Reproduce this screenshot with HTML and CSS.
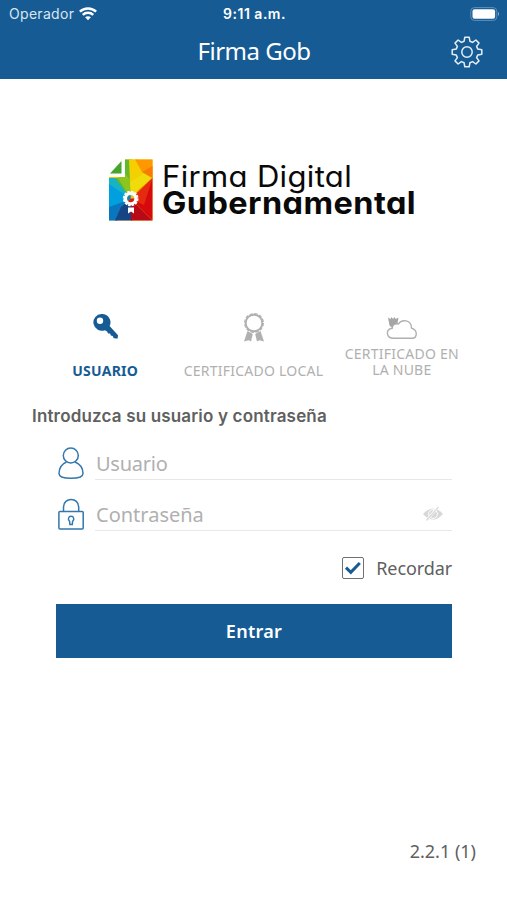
FILE: index.html
```html
<!DOCTYPE html>
<html lang="es">

<head>
  <meta charset="UTF-8">
  <meta name="viewport" content="width=device-width, initial-scale=1.0">
  <title>Firma Gob</title>

  <link rel="stylesheet" href="styles.css">
</head>

<body>

  <header>
    <div class="status-bar">
      <div class="carrier">
        <span>Operador</span>
        <svg width="18" height="14" viewBox="0 0 18 14" fill="none" stroke="#fff" stroke-width="2.5">
          <path d="M.9 4.7C5.3.4 12.7.4 17.1 4.7" />
          <path d="M3.8 7.9C6.7 5.1 11.3 5.1 14.2 7.9" />
          <path d="M6.1 10.2C7.7 8.8 10.3 8.8 11.9 10.2L9 13.2Z" fill="#fff" stroke="none" />
        </svg>
      </div>
      <span class="time">9:11 a.m.</span>
      <svg class="battery" width="30" height="14" viewBox="0 0 30 14">
        <rect x=".8" y=".6" width="26" height="12.8" rx="3.6" fill="none" stroke="#5f90b8" />
        <rect x="2.5" y="2.3" width="22.6" height="9.4" rx="2" fill="#fff" />
        <path d="M28 4.8Q30 7 28 9.2Z" fill="#8db0cd" />
      </svg>
    </div>

    <div class="title-bar">
      <h1>Firma Gob</h1>
      <svg class="gear" width="32" height="32" viewBox="0 0 32 32" fill="none" stroke="#e3eef8" stroke-width="1.5" stroke-linejoin="round">
        <path d="M13.8 1.2H18.2L18.9 5.2 21.6 6.4 24.9 4 28 7.1 25.6 10.4 26.8 13.1 30.8 13.8V18.2L26.8 18.9 25.6 21.6 28 24.9 24.9 28 21.6 25.6 18.9 26.8 18.2 30.8H13.8L13.1 26.8 10.4 25.6 7.1 28 4 24.9 6.4 21.6 5.2 18.9 1.2 18.2V13.8L5.2 13.1 6.4 10.4 4 7.1 7.1 4 10.4 6.4 13.1 5.2Z" />
        <circle cx="16" cy="16" r="5.2" />
      </svg>
    </div>
  </header>

  <main>

    <svg class="logo" width="310" height="64" viewBox="0 0 310 64">
      <path d="M1 19V1.5H44.5V62.5H1Z" fill="#f7c600" />
      <path d="M16 1.5H24L22 24 23 41 5 20H16Z" fill="#63b82c" />
      <path d="M16 14 22 22 23 41 10 20Z" fill="#8cc51e" />
      <path d="M21 1.5H30L36 15 22 24Z" fill="#f5d000" />
      <path d="M22 24 36 15 44.5 20 23 41Z" fill="#f0dc0b" />
      <path d="M27 1.5H44.5V20L34 14Z" fill="#ff9800" />
      <path d="M44.5 8V20L34 14Z" fill="#f97c00" />
      <path d="M44.5 20 23 41 31 31Z" fill="#f6a500" />
      <path d="M44.5 20V62.5L23 41Z" fill="#d8090c" />
      <path d="M44.5 20 36 47 23 41Z" fill="#e62a10" />
      <path d="M1 20H7L23 41 1 29Z" fill="#16b2c6" />
      <path d="M1 26 23 41 1 52Z" fill="#00a0df" />
      <path d="M1 49 23 41 9 62.5H1Z" fill="#0877bd" />
      <path d="M7 62.5 13 49 23 41 24 62.5Z" fill="#174584" />
      <path d="M23 41 44.5 62.5H23Z" fill="#b80a16" />
      <path d="M0 0H17V19H0Z" fill="#fff" />
      <path d="M2 15.5 13.5 3V15.5Z" fill="#45a62b" />
      <circle cx="22.7" cy="40.5" r="5.2" fill="#e6c523" stroke="#fff" stroke-width="3.2" />
      <circle cx="22.7" cy="40.5" r="7" fill="none" stroke="#fff" stroke-width="1.7" stroke-dasharray="2.6 1.06" />
      <path d="M22.7 40.5V37A3.600 3.600 0 0 0 20 43Z" fill="#0785bd" />
      <path d="M22.7 40.5 20 43A3.600 3.600 0 0 0 26.3 40.5Z" fill="#d51c1b" />
      <path d="M20 49.5H26V55.500L23 53.500 20 55.500Z" fill="#fff" />
      <text class="logo-light" x="54" y="29" textLength="190" lengthAdjust="spacingAndGlyphs">Firma Digital</text>
      <text class="logo-bold" x="54" y="56" textLength="254" lengthAdjust="spacingAndGlyphs">Gubernamental</text>
    </svg>

    <nav class="tabs">
      <div class="tab active">
        <svg width="28" height="28" viewBox="0 0 28 28">
          <path fill="#165b94" fill-rule="evenodd" d="M9.500 1a8.400 8.400 0 1 0 3.400 16.200l2.200 1.200 1 2 2 .2.700 2 1.900.4.900 2 1.800.6 2.300-.1.300-3.200-8.400-9.200A8.400 8.400 0 0 0 9.500 1ZM8 4.500a3.200 3.200 0 1 1 0 6.400 3.200 3.200 0 0 1 0-6.400Z" />
        </svg>
        <span>USUARIO</span>
      </div>
      <div class="tab">
        <svg width="28" height="32" viewBox="0 0 28 32">
          <circle cx="14" cy="11" r="8.300" fill="none" stroke="#b0b0b0" stroke-width="1.900" />
          <circle cx="14" cy="11" r="9.300" fill="none" stroke="#b0b0b0" stroke-width="1.300" stroke-dasharray="3.400 1.470" />
          <path d="M7.500 19 12.800 22 11 29.500 8.700 28.300 4 29.500ZM20.500 19 15.200 22 17 29.500 19.300 28.300 24 29.500Z" fill="#b0b0b0" />
        </svg>
        <span>CERTIFICADO LOCAL</span>
      </div>
      <div class="tab">
        <svg width="32" height="24" viewBox="0 0 32 24">
          <path d="M8 22.300C-.5 22.300-.5 12.500 6.200 12.300 6.500 8.500 9 7 12.500 8 15.500 2.800 25.500 3.600 25.500 12.200 32.500 14.500 31 22.300 26 22.300Z" fill="none" stroke="#b0b0b0" stroke-width="1.400" />
          <path d="M2 1.500 4.500 3 5.500 1 7 3 8.500 1 9.700 3 12.500 1.500 11.500 7.500 7.500 8.500 6 11.500 3.500 9.500Z" fill="#a6a6a6" />
        </svg>
        <span>CERTIFICADO EN<br>LA NUBE</span>
      </div>
    </nav>

    <form>
      <h2>Introduzca su usuario y contraseña</h2>

      <div class="field">
        <svg width="28" height="34" viewBox="0 0 28 34" fill="none" stroke="#3277ad" stroke-width="1.500">
          <circle cx="14.800" cy="9.500" r="7.500" />
          <path d="M10.500 16C6 18 3 22 3 27.500 3 30.800 8.500 32.300 15 32.300S27 30.800 27 27.500C27 22 24 18 19 16" />
        </svg>
        <div class="input"><span class="user-text">Usuario</span></div>
      </div>

      <div class="field">
        <svg width="28" height="34" viewBox="0 0 28 34" fill="none" stroke="#3277ad" stroke-width="1.500">
          <rect x="2.900" y="14.500" width="24.300" height="17.500" rx="1" />
          <path d="M7.500 14.500V10C7.500 0 22.700 0 22.700 10V14.500" />
          <path d="M13.900 27.500 13.600 24.300C11.400 22.500 12.500 19.300 15.100 19.300S18.800 22.500 16.600 24.300L16.300 27.500Z" />
        </svg>
        <div class="input">
          <span class="pass-text">Contraseña</span>
          <svg class="eye" width="22" height="16" viewBox="0 0 22 16">
            <path d="M1 8Q11-3 21 8 11 19 1 8Z" fill="#d7d8d8" />
            <circle cx="11" cy="8" r="4.400" fill="#d7d8d8" stroke="#fff" stroke-width="1" />
            <path d="M5 14 16 1" stroke="#fff" stroke-width="2.600" />
            <path d="M4.500 14.500 16.500 1" stroke="#d7d8d8" stroke-width="1.200" />
          </svg>
        </div>
      </div>

      <div class="remember">
        <span class="checkbox">
          <svg width="18" height="14" viewBox="0 0 18 14">
            <path d="M2 6.700 6.800 11.300 15.800 2" fill="none" stroke="#165b94" stroke-width="3" />
          </svg>
        </span>
        <span class="remember-text">Recordar</span>
      </div>

      <button type="button"><span>Entrar</span></button>
    </form>

  </main>

  <footer>2.2.1 (1)</footer>

</body>

</html>
```

FILE: styles.css
```css
* {
  box-sizing: border-box;
}

body {
  margin: 0;
  height: 900px;
  display: flex;
  flex-direction: column;
  background-color: #fff;
  font-family: "Noto Sans", "Open Sans", sans-serif;
  color: #606060;
  overflow: hidden;
}

svg {
  display: block;
  flex: none;
}

header {
  height: 79px;
  background-color: #165b94;
  color: #fff;
}

.status-bar {
  display: grid;
  grid-template-columns: 1fr auto 1fr;
  align-items: center;
  height: 27px;
  padding: 0 7px 0 9px;
  font-family: Inter, sans-serif;
  font-size: 14px;
}

.carrier {
  display: flex;
  align-items: center;
  gap: 5px;
  color: #d9e6f1;
  letter-spacing: 0.3px;
}

.time {
  font-weight: 600;
  letter-spacing: 0.5px;
}

.battery {
  justify-self: end;
}

.title-bar {
  display: grid;
  grid-template-columns: 1fr auto 1fr;
  align-items: center;
  height: 49px;
  padding: 0 24px 0 25px;
}

.title-bar h1 {
  grid-column: 2;
  margin: 0 0 2px;
  font-size: 24px;
  font-weight: 400;
  letter-spacing: -0.5px;
}

.gear {
  justify-self: end;
}

main {
  flex: 1;
  padding-top: 79px;
}

.logo {
  margin-left: 108px;
}

.logo-light,
.logo-bold {
  font-family: Inter, sans-serif;
  font-feature-settings: "cv11";
  font-size: 29.5px;
  letter-spacing: 0.3px;
  fill: #090909;
}

.logo-bold {
  font-size: 31px;
  font-weight: 700;
  letter-spacing: 0.4px;
}

.tabs {
  display: grid;
  grid-template-columns: repeat(3, 1fr);
  height: 68px;
  margin: 89px 31px 0;
}

.tab {
  display: flex;
  flex-direction: column;
  align-items: center;
  justify-content: space-between;
  font-size: 14px;
  line-height: 16px;
  letter-spacing: 0.24px;
  color: #b0b0b0;
  text-align: center;
  white-space: nowrap;
}

.tab svg {
  margin: 1px 0 0 1px;
}

.tab:first-child svg {
  margin-top: 2px;
}

.tab:last-child svg {
  margin-top: 5px;
}

.tab:last-child span {
  margin-bottom: 1px;
}

.tab.active {
  font-weight: 700;
  color: #165b94;
}

form {
  padding: 0 55px 0 56px;
}

form h2 {
  margin: 26px 0 0 -24px;
  font-family: Inter, sans-serif;
  font-size: 17px;
  font-weight: 600;
  line-height: 22px;
  letter-spacing: 0.17px;
  white-space: nowrap;
}

.field {
  display: flex;
  align-items: flex-end;
  gap: 11px;
  height: 51px;
}

.field:nth-of-type(1) {
  height: 53px;
}

.input {
  flex: 1;
  display: flex;
  align-items: center;
  justify-content: space-between;
  height: 34px;
  padding: 1px 8px 0 1px;
  border-bottom: 1px solid #e8e8e8;
  font-size: 20px;
  color: #b0b0b0;
}

.user-text {
  letter-spacing: -0.25px;
}

.remember {
  display: flex;
  align-items: center;
  justify-content: flex-end;
  gap: 12px;
  height: 22px;
  margin-top: 26px;
  font-size: 18px;
}

.remember-text {
  letter-spacing: -0.1px;
}

.checkbox {
  display: flex;
  align-items: center;
  justify-content: center;
  width: 22px;
  height: 22px;
  border: 1px solid #707070;
  border-radius: 2px;
}

button {
  display: block;
  width: 100%;
  height: 54px;
  margin-top: 25px;
  border: 0;
  background-color: #165b94;
  font-family: inherit;
  font-size: 18px;
  font-weight: 600;
  letter-spacing: 0.3px;
  color: #fff;
}

footer {
  height: 61px;
  padding-right: 31px;
  font-size: 18px;
  line-height: 25px;
  text-align: right;
}
```
